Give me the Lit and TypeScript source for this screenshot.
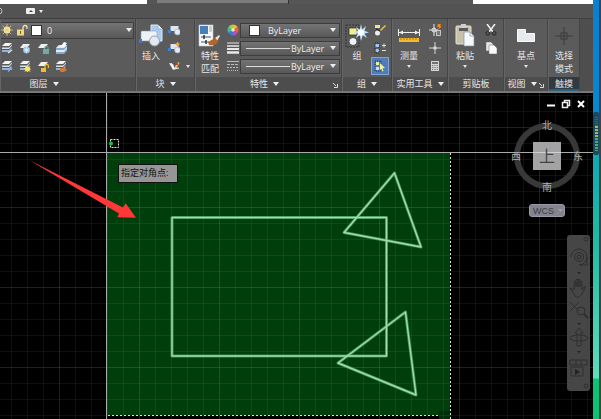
import { LitElement, html, css, svg, TemplateResult } from "lit";
import { customElement, property } from "lit/decorators.js";

const sheets = svg`
  <path d="M4 1h7l-3 3H1z" fill="#f4f4f4"/><path d="M1 5.500h7l3-3v1.200L8 7H1z" fill="#d8dcde"/>
  <path d="M1 8h7l2.500-2.500v1.500L8 10H1z" fill="#8db4dc"/>`;
const oneSheet = svg`<path d="M4 2h7L8 6H1z" fill="#f0f0f0"/>`;
const lockShape = (c: string) => svg`
  <rect x="6" y="7" width="6" height="5" fill="${c}"/><path d="M7.500 7V5.500a1.800 1.800 0 0 1 3.500 0V7" fill="none" stroke="${c}"/>`;
const sunShape = (x: number, y: number, r: number) => svg`
  <g transform="translate(${x} ${y})"><circle r="${r}" fill="#ffe9a0"/>
  <path d="M0-6V6M-6 0H6M-4.200-4.200 4.200 4.200M-4.200 4.200 4.200-4.200" stroke="#e0cc86" stroke-width=".8"/></g>`;
const blocks = svg`
  <rect x="2.500" y="2" width="8" height="5" rx=".5" fill="#dfe6ee"/><rect x="0" y="6" width="3" height="3" fill="#3f7fd0"/>
  <circle cx="9.500" cy="8" r="3" fill="#e4ebf3" stroke="#96a9bf" stroke-width=".6"/>`;

const icons: Record<string, TemplateResult<2>> = {
  sun: sunShape(6, 6, 3.4),
  unlock: svg`<rect x="1" y="5.500" width="7" height="6" fill="#f0d682"/><path d="M7 6V3.500a2 2 0 0 1 4 0V5" fill="none" stroke="#f3e3ad" stroke-width="1.300"/><rect x="4" y="7" width="1" height="3" fill="#7a6426"/>`,
  layerPick: svg`${sheets}<path d="M7 11l4-3" stroke="#cfe0f5" stroke-width="1.500"/>`,
  layerFreeze: svg`${oneSheet}<circle cx="7.500" cy="8" r="3.400" fill="#8cc0ee"/><path d="M7.500 5v6M4.800 6.500l5.400 3M4.800 9.500l5.400-3" stroke="#e8f5ff" stroke-width=".8"/>`,
  layerLock: svg`${oneSheet}${lockShape("#72aaa6")}`,
  layerMatch: svg`<path d="M4 3h8v6l-3 3H1V6z" fill="#86a9ca"/><path d="M4 3h8L9 6H1zM1 8h8l3-3v1.500L9 10H1z" fill="#e1edf6"/><path d="M6 4l3-4 3 1-3 4z" fill="#fff"/>`,
  layerPrev: svg`${sheets}<path d="M7 11.500l3.500-3.500M8.500 8h2v2" fill="none" stroke="#7db1ed" stroke-width="1.200"/>`,
  layerThaw: svg`${sheets}<circle cx="8.500" cy="9" r="2.500" fill="#fff06a"/><path d="M8.500 5v8M4.500 9h8M5.700 6.200l5.600 5.600M5.700 11.800l5.600-5.600" stroke="#ffe25a" stroke-width=".8"/>`,
  layerUnlock: svg`${oneSheet}<rect x="4" y="8" width="5" height="4" fill="#f1bd28"/><path d="M8 8V6a1.700 1.700 0 0 1 3.400 0v2" fill="none" stroke="#f1bd28" stroke-width="1.200"/>`,
  layerPaint: svg`${sheets}<path d="M5 8l5 0 2 2-4 2.500-3-1z" fill="#d17b34"/>`,
  blockMake: blocks,
  blockEdit: svg`${blocks}<path d="M9.500-1l1 2.200 2.300.8-2.300 1-1 2-1-2-2.200-1 2.200-.8z" fill="#f7a12b"/>`,
  blockAttr: svg`<path d="M1 3l4 1 2 5-2 1z" fill="#e9ecef"/><path d="M6 8l4-6 1.500 1L8 9z" fill="#e9c46a"/><path d="M3 3l3 6 5-1" fill="none" stroke="#fff"/><circle cx="9" cy="4" r="1.200" fill="#c4403a"/>`,
  wheel: svg`
    <path d="M6 6V.5a5.500 5.500 0 0 1 4.800 2.800z" fill="#f6b73c"/><path d="M6 6l4.800-2.700a5.500 5.500 0 0 1 0 5.400z" fill="#e8603f"/>
    <path d="M6 6l4.800 2.700A5.500 5.500 0 0 1 6 11.500z" fill="#c04bb4"/><path d="M6 6v5.500a5.500 5.500 0 0 1-4.800-2.800z" fill="#3f74d8"/>
    <path d="M6 6L1.200 8.700a5.500 5.500 0 0 1 0-5.400z" fill="#3fb8a0"/><path d="M6 6L1.200 3.300A5.500 5.500 0 0 1 6 .5z" fill="#9bd04a"/><circle cx="6" cy="6" r="1.800" fill="#fff" opacity=".75"/>`,
  weights: svg`<path d="M0 1h12" stroke="#e8e8e8"/><path d="M0 4h12" stroke="#e8e8e8" stroke-width="1.500"/><path d="M0 7h12" stroke="#e8e8e8" stroke-width="2"/><path d="M0 10.500h12" stroke="#e8e8e8" stroke-width="2.500"/>`,
  dashes: svg`<path d="M0 1.500h12" stroke="#bbb"/><path d="M0 4.500h12" stroke="#bbb" stroke-dasharray="3 1"/><path d="M0 7.500h12" stroke="#bbb" stroke-dasharray="2 1"/><path d="M0 10.500h12" stroke="#bbb" stroke-dasharray="1 1"/>`,
  groupEdit: svg`<rect x="1" y="1" width="5" height="3" fill="#f0e48a"/><circle cx="3.500" cy="9" r="2.500" fill="#e8eef4"/><path d="M6 6l5-5 1 1-5 5z" fill="#f2c14a"/><path d="M2 5l4 2" stroke="#222"/>`,
  groupAdd: svg`<path d="M1 1h4v10H1z" fill="none" stroke="#222" stroke-dasharray="1 1"/><rect x="1.500" y="2" width="3.500" height="3" fill="#9fc6ef"/><circle cx="3.300" cy="8.500" r="1.800" fill="#9fc6ef"/><path d="M8 3.500h4M10 1.500v4M8 8.500h4" stroke="#ddd"/>`,
  groupSel: svg`<path d="M1 1h6v10H1z" fill="none" stroke="#16335f" stroke-dasharray="1 1"/><rect x="2" y="2" width="3" height="3" fill="#e6efb0"/><circle cx="3.500" cy="8.500" r="1.800" fill="#cfe2f7"/><path d="M6 3l5 5-2.500.3L9.500 11l-1.200.5-1-2.500L6 10z" fill="#f3ef9a"/>`,
  idPoint: svg`<path d="M5 0v12M0 6h9" stroke="#e6e6e6"/><circle cx="5" cy="6" r="2" fill="none" stroke="#e6e6e6"/><path d="M9 0h3l-1 2h2l-4 4 1-3H8z" fill="#f08a24"/><rect x="7.500" y="6.500" width="4" height="5" fill="#777" stroke="#ddd" stroke-width=".8"/>`,
  point: svg`<path d="M6 0v12M0 6h12" stroke="#d5d5d5"/><circle cx="6" cy="6" r="1.800" fill="#d5d5d5"/>`,
  calc: svg`<rect x="2" y="1" width="8" height="10" fill="#d6d6d6"/><rect x="3" y="2" width="6" height="2" fill="#6e7376"/><path d="M3 5.500h6M3 7.500h6M3 9.500h6" stroke="#777" stroke-dasharray="1 .7"/>`,
  cut: svg`<path d="M2 0l6 8M10 0L4 8" stroke="#f1f1f1" stroke-width="1.500"/><circle cx="2.800" cy="9.300" r="1.800" fill="none" stroke="#222"/><circle cx="9.200" cy="9.300" r="1.800" fill="none" stroke="#222"/>`,
  copy: svg`<path d="M1 0h5l2 2v7H1z" fill="#e9e9e9" stroke="#666" stroke-width=".5"/><path d="M4 3h5l3 3v6H4z" fill="#fafafa" stroke="#666" stroke-width=".5"/>`,
  insert: svg`
    <path d="M12 1h7l4 4v12h-11z" fill="#a9ccf0" stroke="#dcebfa"/><path d="M19 1v4h4" fill="#e6f1fc" stroke="#6f9aca" stroke-width=".5"/>
    <rect x="2" y="7" width="16" height="10" rx="1" fill="#eef1f5" stroke="#8fa0b4" stroke-width=".6"/><rect x="0" y="15" width="3" height="4" fill="#3b7bd4"/>
    <circle cx="15.500" cy="17" r="5" fill="#e4e9ef" stroke="#92a2b4"/>`,
  match: svg`
    <rect x="1" y="1" width="14" height="21" fill="#f6f7f9" stroke="#c2c8cf" stroke-width=".6"/><rect x="2" y="2" width="8" height="8" fill="#477fba"/><path d="M11 3h3M11 5h3M11 7h3" stroke="#9aa"/>
    <path d="M3 13h10M3 18h8" stroke="#456"/><path d="M6 11v4M8 16v4" stroke="#234" stroke-width="1.500"/>
    <path d="M17 14l4-3 1 1-3 5z" fill="#eee0c8"/><path d="M10 18l7-4 3 3c-1 4-5 5-9 4z" fill="#b5652b"/>`,
  group: svg`
    <path d="M1 1h13v22H1z" fill="none" stroke="#333" stroke-dasharray="2 1"/><rect x="4" y="4" width="8" height="7" fill="#f4ee8e" stroke="#222" stroke-width=".7"/>
    <circle cx="8" cy="17.500" r="4" fill="#eef2f5" stroke="#222" stroke-width=".7"/>
    <path d="M16 0l1.200 5.500L21 2l-1.500 4.700L24 8.500l-4.500 1L22 14l-4.300-2.800L16 17l-1.200-5.800L11 14l1.700-4.500L8.500 8.500l4.300-1.800L11 3l3.800 2.500z" fill="#b9e1ff"/><circle cx="16" cy="8.500" r="3" fill="#fff"/>`,
  measure: svg`
    <path d="M1.500 5v7M22.500 5v7M2 8.500h20" stroke="#f1f1f1"/><path d="M2 8.500l4-2v4zM22 8.500l-4-2v4z" fill="#f1f1f1"/>
    <rect x="2" y="14" width="20" height="4" fill="#f5b92b"/><path d="M4 14v2M7 14v2M10 14v2M13 14v2M16 14v2M19 14v2" stroke="#8a5e08" stroke-width=".7"/>`,
  paste: svg`
    <rect x="3" y="2" width="15" height="18" rx="1" fill="#c9c0aa" stroke="#e6e3da"/><rect x="6" y="4" width="9" height="3" fill="#595959"/><rect x="8" y="0" width="5" height="4" fill="#cfcfcf"/>
    <path d="M11 8h6l4 4v10H11z" fill="#f6f8fa" stroke="#8794a0" stroke-width=".7"/><path d="M17 8v4h4" fill="none" stroke="#8794a0" stroke-width=".7"/>`,
  base: svg`<path d="M3.500 5.500h8v4h9v8h-17z" fill="#e6e9ed" stroke="#fafafa"/>`,
  touch: svg`<path d="M12 3v18M3 12h18" stroke="#3d3d3d"/><rect x="9" y="9" width="6" height="6" fill="none" stroke="#3d3d3d"/>`,
};

const icon = (name: string, size = 12) => html`<svg class="icon" width=${size} height=${size} viewBox="0 0 ${size} ${size}" aria-hidden="true">${icons[name]}</svg>`;
const caret = html`<svg class="caret" width="6" height="4" viewBox="0 0 6 4" aria-hidden="true"><path d="M0 0h6L3 4z" fill="#eee"/></svg>`;
const dot = html`<svg class="caret" width="4" height="3" viewBox="0 0 4 3" aria-hidden="true"><path d="M0 0h4L2 3z" fill="#e4e4e4"/></svg>`;
const launcher = html`<svg class="launcher" width="5" height="5" viewBox="0 0 5 5" aria-hidden="true"><path d="M0 0l3 3M4.500 1v3.500H1" fill="none" stroke="#ddd"/></svg>`;

const controls = css`
  button, select { font: inherit; color: inherit; background: none; border: 0; padding: 0; margin: 0; }
  svg { display: block; flex: none; }
`;

@customElement("ribbon-panel")
class RibbonPanel extends LitElement {
  @property() heading = "";
  @property({ type: Boolean }) menu = false;
  @property({ type: Boolean }) dialog = false;
  static styles = [controls, css`
    :host { display: flex; flex-direction: column; flex: none; box-sizing: border-box; border-right: 1px solid #464646; border-left: 1px solid #656565; }
    .body { display: flex; height: 56px; padding-top: 2px; background: #5b5b5b; }
    .title { display: flex; align-items: center; height: 14px; background: #4d4d4d; }
    .name { display: flex; flex: 1; align-items: center; justify-content: center; gap: 5px; line-height: 14px; white-space: nowrap; }
    .launcher { margin: 3px 3px 0 0; }
    :host(.cut) .name { flex: none; width: 86px; }
    :host(.active) .title { background: #2f3b43; box-shadow: inset 0 -2px #2c617c; }
  `];
  render() {
    return html`<div class="body"><slot></slot></div>
      <div class="title"><button class="name">${this.heading}${this.menu ? caret : ""}</button>${this.dialog ? launcher : ""}</div>`;
  }
}

@customElement("ribbon-bar")
class RibbonBar extends LitElement {
  static styles = [controls, css`
    :host { display: flex; background: #5b5b5b; border-bottom: 2px solid #777; }
    .layers { width: 136px; } .block { width: 59px; } .props { width: 147px; } .group { width: 50px; }
    .utils { width: 56px; } .clip { width: 56px; } .view { width: 44px; } .touch { width: 32px; }
    .rest { flex: 1; background: #4e4e4e; }
    .big { display: flex; flex-direction: column; align-items: center; width: 32px; padding-top: 3px; line-height: 13px; white-space: nowrap; }
    .big .icon { margin-bottom: 1px; }
    .slim { width: 28px; margin-right: 3px; }
    .wide { flex: 1; }
    .col { display: flex; flex-direction: column; }
    .row { display: flex; align-items: center; height: 18px; gap: 6px; }
    .row button { display: block; }
    .drop { display: flex; align-items: center; height: 9px; }
    .grow { flex: 1; min-width: 0; }
    .push { margin-left: 4px; }
    .on { padding: 2px; background: #527cb4; border: 1px solid #7fa5d8; margin-left: -3px; }
    .combo { display: flex; flex: 1; align-items: center; gap: 4px; height: 15px; min-width: 0; box-sizing: border-box; padding: 0 3px; border: 1px solid #3d3d3d; background: linear-gradient(#747474, #585858); color: #eee; }
    .combo select { flex: 1; min-width: 0; height: 13px; line-height: 13px; appearance: none; outline: 0; }
    .swatch { width: 11px; height: 11px; background: #fff; border: 1px solid #333; box-sizing: border-box; }
    .field { gap: 1px; }
    .color { padding-left: 8px; gap: 8px; }
    .line { width: 44px; height: 1px; background: #ddd; }
    .linetype { gap: 1px; padding-left: 5px; }
    .layer { border-left: 0; padding: 0 1px 0 0; gap: 5px; height: 17px; }
    .layer .icon { margin-right: -2px; }
    .list { margin-right: 1px; }
  `];
  private big(name: string, lines: string[], arrow = false, cls = "") {
    return html`<button class="big ${cls}">${icon(name, 24)}${lines.map((l) => html`<span>${l}</span>`)}${arrow ? html`<span class="drop">${dot}</span>` : ""}</button>`;
  }
  private tools(names: string[], label: string) {
    return names.map((n, i) => html`<div class="row"><button aria-label="${label} ${i + 1}">${icon(n)}</button></div>`);
  }
  private style(name: string, label: string) {
    return html`<div class="row field">${icon(name)}<div class="combo linetype"><span class="line"></span><select aria-label=${label}><option>ByLayer</option></select>${caret}</div></div>`;
  }
  render() {
    const rowA = ["layerPick", "layerFreeze", "layerLock", "layerMatch"];
    const rowB = ["layerPrev", "layerThaw", "layerUnlock", "layerPaint"];
    return html`
      <ribbon-panel class="layers cut" heading="图层" menu>
        <div class="col grow list">
          <div class="row"><div class="combo layer">${icon("sun")}${icon("unlock")}<span class="swatch"></span>
            <select aria-label="图层"><option>0</option></select>${caret}</div></div>
          ${[rowA, rowB].map((r) => html`<div class="row">${r.map((n) => html`<button aria-label=${n}>${icon(n)}</button>`)}</div>`)}
        </div>
      </ribbon-panel>
      <ribbon-panel class="block" heading="块" menu>
        ${this.big("insert", ["插入"], false, "slim")}
        <div class="col">
          <div class="row"><button aria-label="创建">${icon("blockMake")}</button></div>
          <div class="row"><button aria-label="编辑">${icon("blockEdit")}</button></div>
          <div class="row"><button aria-label="属性">${icon("blockAttr")}</button>${dot}</div>
        </div>
      </ribbon-panel>
      <ribbon-panel class="props" heading="特性" menu dialog>
        ${this.big("match", ["特性", "匹配"], false, "slim")}
        <div class="col grow list">
          <div class="row field">${icon("wheel")}<div class="combo color"><span class="swatch"></span><select aria-label="颜色"><option>ByLayer</option></select>${caret}</div></div>
          ${this.style("weights", "线宽")}${this.style("dashes", "线型")}
        </div>
      </ribbon-panel>
      <ribbon-panel class="group" heading="组" menu>
        ${this.big("group", ["组"], false, "slim")}
        <div class="col">
          <div class="row"><button aria-label="编辑组">${icon("groupEdit")}</button></div>
          <div class="row"><button aria-label="添加到组">${icon("groupAdd")}</button></div>
          <div class="row"><button class="on" aria-label="组选择" aria-pressed="true">${icon("groupSel")}</button></div>
        </div>
      </ribbon-panel>
      <ribbon-panel class="utils" heading="实用工具" menu>
        ${this.big("measure", ["测量"], true)}<div class="col push">${this.tools(["idPoint", "point", "calc"], "实用工具")}</div>
      </ribbon-panel>
      <ribbon-panel class="clip" heading="剪贴板">
        ${this.big("paste", ["粘贴"], true)}<div class="col push">${this.tools(["cut", "copy"], "剪贴板")}</div>
      </ribbon-panel>
      <ribbon-panel class="view" heading="视图" menu dialog>${this.big("base", ["基点"], true, "wide")}</ribbon-panel>
      <ribbon-panel class="touch active" heading="触摸">${this.big("touch", ["选择", "模式"], false, "wide")}</ribbon-panel>
      <div class="rest"></div>`;
  }
}

@customElement("drawing-area")
class DrawingArea extends LitElement {
  static styles = [controls, css`
    :host { display: block; position: relative; flex: 1; overflow: hidden; background: #000; }
    .plane { position: absolute; inset: 0; width: 100%; height: 100%; }
    .prompt { position: absolute; left: 118px; top: 71px; box-sizing: border-box; width: 60px; height: 19px; padding-left: 2px; border: 1px solid #111; background: #969696; color: #111; line-height: 16px; white-space: nowrap; }
    .side { position: absolute; top: 5px; right: 2px; display: flex; flex-direction: column; align-items: flex-end; }
    .window { display: flex; gap: 5px; padding-right: 5px; }
    .compass { margin-top: 8px; }
    .wcs { display: flex; align-items: center; gap: 4px; width: 36px; height: 13px; margin: 10px 26px 0 0; padding-left: 3px; box-sizing: border-box; border: 1px solid #9a9ba6; border-radius: 3px; background: #83848e; color: #3c3d45; font-family: "Liberation Sans", sans-serif; }
    .nav { margin-top: 18px; display: block; }
    .mark { font-size: 10px; fill: #b0b0b0; text-anchor: middle; }
    .top { font-size: 16px; fill: #444; text-anchor: middle; }
  `];
  render() {
    const steps = [16, 32, 48, 64];
    return html`
      <svg class="plane" aria-hidden="true">
        <defs><pattern id="grid" x="59" y="34" width="80" height="80" patternUnits="userSpaceOnUse">
          ${steps.map((s) => svg`<path d="M${s + 0.5} 0v80M0 ${s + 0.5}h80" stroke="#9c9cc8" stroke-opacity=".1"/>`)}
          <path d="M.5 0v80M0 .5h80" stroke="#9c9cc8" stroke-opacity=".2"/>
        </pattern></defs>
        <rect x="107" y="60" width="343" height="262" fill="#003e0c"/>
        <rect x="439" y="318" width="12" height="8" fill="#003009"/>
        <rect width="100%" height="100%" fill="url(#grid)"/>
        <path d="M450.500 60v266M108 322.500h331" stroke="#d8e6d8" stroke-dasharray="2 2"/>
        <rect y="59" width="100%" height="1" fill="#aaa"/><rect x="106" width="1" height="100%" fill="#aaa"/>
        <g fill="none" stroke-linejoin="round">
          ${[["#3f8f55", 3], ["#a2dcae", 1.4]].map(([c, w]) => svg`<g stroke=${c} stroke-width=${w}>
            <path d="M172 124.500h214.500v138.500H172z"/><path d="M394.500 80L344 139.500l77 14.500z"/><path d="M405.500 219L338 270l78 32z"/></g>`)}
        </g>
        <rect x="110.500" y="46.500" width="8" height="8" fill="none" stroke="#ddd" stroke-dasharray="2 1"/><circle cx="111" cy="50.500" r="2" fill="#00d42a"/>
        <path d="M29 67L123 114.500l2.700-4.200L136 124.800l-18.700-.6 1.700-3.700z" fill="#ff3737"/>
      </svg>
      <div class="prompt" role="status">指定对角点:</div>
      <div class="side">
        <div class="window">
          <button aria-label="最小化"><svg width="10" height="12"><path d="M1 7.500h8" stroke="#fff" stroke-width="2"/></svg></button>
          <button aria-label="还原"><svg width="10" height="12"><path d="M3.500 5V2.500h5v5H7" fill="none" stroke="#eee" stroke-width="1.500"/><rect x="1.500" y="4.500" width="5" height="5" fill="none" stroke="#eee" stroke-width="1.500"/></svg></button>
          <button aria-label="关闭"><svg width="10" height="12"><path d="M2 3l6 6M8 3L2 9" stroke="#fff" stroke-width="2"/></svg></button>
        </div>
        <svg class="compass" width="84" height="76" viewBox="0 0 84 76">
          <circle cx="40" cy="38" r="30" fill="none" stroke="#383838" stroke-width="6"/>
          <rect x="26" y="24" width="28" height="28" fill="#a3a3a3"/><path d="M26 34.500h28" stroke="#d0d0d0"/>
          <text class="top" x="40" y="44">上</text><text class="mark" x="40" y="11">北</text><text class="mark" x="40" y="73">南</text>
          <text class="mark" x="9" y="42">西</text><text class="mark" x="71" y="42">东</text>
        </svg>
        <button class="wcs">WCS<svg width="5" height="3"><path d="M0 0h5L2.500 3z" fill="#a0a1ac"/></svg></button>
        <svg class="nav" width="24" height="156" viewBox="0 0 24 156" aria-hidden="true">
          <rect width="23" height="156" rx="3" fill="#464646"/>
          <g fill="none" stroke="#2e2e2e">
            <circle cx="19" cy="4" r="2"/><path d="M4 22a8 8 0 1 1 8 8h8V22"/><circle cx="12" cy="22" r="4.500"/><circle cx="12" cy="22" r="2"/>
            <path d="M3 53l4 2V47q1-2 2 0v5V45q1-2 2 0v7V45q1-2 2 0v7V47q1-2 2 0v8l2-3q2-1 1 1l-3 6-3 3H9z"/>
            <path d="M3 67l9 9M12 67l-9 9"/><circle cx="14" cy="76" r="4"/><path d="M17 79l4 4" stroke-width="2"/>
            <ellipse cx="12" cy="103" rx="9" ry="3"/><path d="M10 111V98H8l4-5 4 5h-2v13z"/>
            <path d="M3 125h17v5H3zM9 125v5M14 125v5M4 132h12v9H4z"/><circle cx="19" cy="151" r="2"/>
          </g>
          <path d="M10 37h4l-2 2zM10 88h4l-2 2zM10 116h4l-2 2zM8 134l5 3-5 3z" fill="#222"/>
        </svg>
      </div>`;
  }
}

@customElement("app-root")
class AppRoot extends LitElement {
  static styles = [controls, css`
    :host { display: flex; min-height: 100vh; background: #434343; color: #e6e6e6; font: 9px "Open Sans", "Noto Sans CJK SC", sans-serif; }
    .app { display: flex; flex-direction: column; flex: 1; min-width: 0; }
    .strip { display: flex; height: 4px; background: #fff; }
    .blank { width: 147px; } .tone { width: 10px; background: #555; } .field { width: 131px; background: #7d7d7d; } .tail { width: 185px; background: #565656; border-left: 1px solid #333; box-sizing: border-box; }
    .field { border-bottom: 1px solid #555; box-sizing: border-box; }
    .tabs { display: flex; align-items: center; gap: 23px; height: 14px; background: #535353; border-bottom: 1px solid #404040; }
    .edge { width: 6px; margin-right: 2px; background: linear-gradient(#0b7fd0 0, #0a86d0 112px, #12a8b4 156px, #23b9a4 240px, #62dcba 378px, #0dc271 379px); padding-top: 112px; box-sizing: border-box; }
    .meter { display: block; }
  `];
  render() {
    return html`
      <div class="app">
        <div class="strip"><div class="blank"></div><div class="tone"></div><div class="field"></div><div class="tail"></div></div>
        <div class="tabs"><svg width="3" height="8"><circle cx="-1" cy="4" r="3" fill="none" stroke="#bbb"/></svg>
          <button aria-label="功能区"><svg width="18" height="8"><rect y="1" width="9" height="6" rx="1" fill="#eee"/><path d="M3 5h4L5 3z" fill="#444"/><path d="M13 3h4l-2 3z" fill="#eee"/></svg></button></div>
        <ribbon-bar></ribbon-bar>
        <drawing-area></drawing-area>
      </div>
      <div class="edge"><svg class="meter" width="6" height="43" aria-hidden="true"><rect width="6" height="43" rx="2" fill="#174a61"/>
        <path d="M3.500 5v9" stroke="#2d6880" stroke-width="3" stroke-dasharray="1 1"/><path d="M3.500 14v12" stroke="#b3b650" stroke-width="3" stroke-dasharray="2 1"/><path d="M3.500 26v13" stroke="#4faa78" stroke-width="3" stroke-dasharray="2 1"/></svg></div>`;
  }
}
